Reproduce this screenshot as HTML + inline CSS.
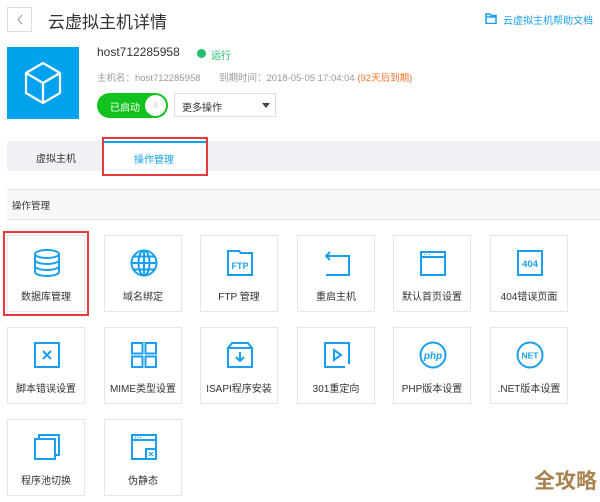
<!DOCTYPE html><html><head><meta charset="utf-8"><style>
*{margin:0;padding:0;box-sizing:border-box}
body{width:600px;height:502px;background:#fff;font-family:"Liberation Sans","Noto Sans CJK SC",sans-serif;position:relative;overflow:hidden;color:#333}
.a{position:absolute}
.card{position:absolute;width:78px;height:77px;border:1px solid #e6e6e6;background:#fff}
.card svg{position:absolute;left:24px;top:12px}
.card .t{position:absolute;left:0;right:0;top:52px;text-align:center;font-size:10px;color:#333;white-space:nowrap}
</style></head><body>
<div class="a" style="left:7px;top:7px;width:25px;height:25px;border:1px solid #ddd"></div>
<svg class="a" style="left:15px;top:13px" width="10" height="13"><path d="M7 2L3 6.5L7 11" stroke="#999" fill="none" stroke-width="1"/></svg>
<div class="a" style="left:48px;top:8px;font-size:17px;color:#333">云虚拟主机详情</div>
<svg class="a" style="left:485px;top:13px" width="12" height="11"><path d="M1 1h4l1 1.5h5v8H1z M1 4h10" stroke="#1a9ff0" fill="none" stroke-width="1.5"/></svg>
<div class="a" style="left:503px;top:12px;font-size:10px;color:#1a9ff0;white-space:nowrap">云虚拟主机帮助文档</div>
<div class="a" style="left:7px;top:47px;width:72px;height:72px;background:#00a2ee"></div>
<svg class="a" style="left:21px;top:61px" width="44" height="44"><path d="M22 2L39 12V32L22 42L5 32V12Z M5 12L22 22L39 12 M22 22V42" stroke="#fff" fill="none" stroke-width="2.2" stroke-linejoin="round"/></svg>
<div class="a" style="left:97px;top:45px;font-size:12px;color:#333">host712285958</div>
<div class="a" style="left:197px;top:49px;width:9px;height:9px;border-radius:50%;background:#1fbf6c"></div>
<div class="a" style="left:211px;top:47px;font-size:10px;color:#1fbf6c">运行</div>
<div class="a" style="left:97px;top:70px;font-size:9.5px;color:#999;white-space:nowrap">主机名：host712285958</div>
<div class="a" style="left:219px;top:70px;font-size:9.5px;color:#999;white-space:nowrap">到期时间：2018-05-05 17:04:04 <span style="color:#f5732b">(92天后到期)</span></div>
<div class="a" style="left:97px;top:93px;width:71px;height:25px;border-radius:13px;background:#12c21f"></div>
<div class="a" style="left:110px;top:99px;font-size:10px;color:#fff">已启动</div>
<div class="a" style="left:145px;top:95px;width:21px;height:21px;border-radius:50%;background:#fff;color:#ccc;font-size:9px;text-align:center;line-height:21px">II</div>
<div class="a" style="left:174px;top:93px;width:102px;height:24px;border:1px solid #ddd"></div>
<div class="a" style="left:182px;top:99px;font-size:10px;color:#333">更多操作</div>
<svg class="a" style="left:262px;top:103px" width="8" height="5"><path d="M0 0H8L4 5Z" fill="#444"/></svg>
<div class="a" style="left:7px;top:141px;width:593px;height:30px;background:#eff1f4"></div>
<div class="a" style="left:36px;top:150px;font-size:10px;color:#333">虚拟主机</div>
<div class="a" style="left:104px;top:141px;width:102px;height:32px;background:#fff;border-top:2px solid #00a2ee"></div>
<div class="a" style="left:102px;top:137px;width:106px;height:39px;border:2px solid #e83a3a"></div>
<div class="a" style="left:134px;top:151px;font-size:10px;color:#1a9ff0">操作管理</div>
<div class="a" style="left:7px;top:189px;width:593px;height:31px;background:#f7f8fa;border-top:1px solid #e5e5e5;border-bottom:1px solid #e5e5e5"></div>
<div class="a" style="left:12px;top:198px;font-size:9.5px;color:#333">操作管理</div>

<div class="card" style="left:7px;top:235px"><svg width="30" height="30"><g stroke="#1a9ff0" fill="none" stroke-width="2"><ellipse cx="15" cy="6" rx="12" ry="4"/><path d="M3 6v18c0 2.2 5.4 4 12 4s12-1.8 12-4V6 M3 12c0 2.2 5.4 4 12 4s12-1.8 12-4 M3 18c0 2.2 5.4 4 12 4s12-1.8 12-4"/></g></svg><div class="t">数据库管理</div></div>
<div class="card" style="left:104px;top:235px"><svg width="30" height="30"><g stroke="#1a9ff0" fill="none" stroke-width="2"><circle cx="15" cy="15" r="12.5"/><ellipse cx="15" cy="15" rx="5.5" ry="12.5"/><path d="M2.5 15h25 M15 2.5v25 M4.5 8.5h21 M4.5 21.5h21"/></g></svg><div class="t">域名绑定</div></div>
<div class="card" style="left:200px;top:235px"><svg width="30" height="30"><path d="M3 3h11l2 2h11v22H3z" stroke="#1a9ff0" fill="none" stroke-width="2"/><text x="15" y="21" text-anchor="middle" font-size="9" font-weight="bold" fill="#1a9ff0" font-family="Liberation Sans">FTP</text></svg><div class="t">FTP 管理</div></div>
<div class="card" style="left:297px;top:235px"><svg width="30" height="30"><path d="M4 8h23v19H4 M8 4L4 8l4 4" stroke="#1a9ff0" fill="none" stroke-width="2"/></svg><div class="t">重启主机</div></div>
<div class="card" style="left:393px;top:235px"><svg width="30" height="30"><path d="M3 4h24v23H3z M3 9h24" stroke="#1a9ff0" fill="none" stroke-width="2"/><path d="M6 6.5h1M8.5 6.5h1M11 6.5h1" stroke="#1a9ff0"/></svg><div class="t">默认首页设置</div></div>
<div class="card" style="left:490px;top:235px"><svg width="30" height="30"><path d="M3 3h24v24H3z" stroke="#1a9ff0" fill="none" stroke-width="2"/><text x="15" y="19" text-anchor="middle" font-size="9.5" font-weight="bold" fill="#1a9ff0" font-family="Liberation Sans">404</text></svg><div class="t">404错误页面</div></div>

<div class="card" style="left:7px;top:327px"><svg width="30" height="30"><path d="M3 3h24v24H3z M11 11l8 8M19 11l-8 8" stroke="#1a9ff0" fill="none" stroke-width="2"/></svg><div class="t">脚本错误设置</div></div>
<div class="card" style="left:104px;top:327px"><svg width="30" height="30"><path d="M3 3h10.5v10.5H3z M16.5 3H27v10.5H16.5z M3 16.5h10.5V27H3z M16.5 16.5H27V27H16.5z" stroke="#1a9ff0" fill="none" stroke-width="2"/></svg><div class="t">MIME类型设置</div></div>
<div class="card" style="left:200px;top:327px"><svg width="30" height="30"><path d="M3 8l4-5h16l4 5v19H3z M3 8h24 M15 12v9 M11 17l4 4 4-4" stroke="#1a9ff0" fill="none" stroke-width="2"/></svg><div class="t">ISAPI程序安装</div></div>
<div class="card" style="left:297px;top:327px"><svg width="30" height="30"><path d="M27 24V3H3v24h20 M12 10v10l7-5z" stroke="#1a9ff0" fill="none" stroke-width="2"/></svg><div class="t">301重定向</div></div>
<div class="card" style="left:393px;top:327px"><svg width="30" height="30"><circle cx="15" cy="15" r="12.5" stroke="#1a9ff0" fill="none" stroke-width="2"/><text x="15" y="19" text-anchor="middle" font-size="10" font-style="italic" font-weight="bold" fill="#1a9ff0" font-family="Liberation Sans">php</text></svg><div class="t">PHP版本设置</div></div>
<div class="card" style="left:490px;top:327px"><svg width="30" height="30"><circle cx="15" cy="15" r="12.5" stroke="#1a9ff0" fill="none" stroke-width="2"/><text x="15" y="18.5" text-anchor="middle" font-size="8.5" font-weight="bold" fill="#1a9ff0" font-family="Liberation Sans">NET</text></svg><div class="t">.NET版本设置</div></div>

<div class="card" style="left:7px;top:419px"><svg width="30" height="30"><path d="M3 7h20v20H3z M7 7V3h20v20h-4" stroke="#1a9ff0" fill="none" stroke-width="2"/></svg><div class="t">程序池切换</div></div>
<div class="card" style="left:104px;top:419px"><svg width="30" height="30"><path d="M3 3h24v24H3z M3 8h24" stroke="#1a9ff0" fill="none" stroke-width="2"/><rect x="17" y="17" width="10" height="10" fill="#fff" stroke="#1a9ff0" stroke-width="2"/><path d="M20 20l4 4M24 20l-4 4M6 5.5h1M8.5 5.5h1M11 5.5h1" stroke="#1a9ff0" stroke-width="1.2"/></svg><div class="t">伪静态</div></div>

<div class="a" style="left:3px;top:231px;width:86px;height:85px;border:2px solid #e83a3a"></div>
<div class="a" style="left:534px;top:468px;font-size:21px;font-weight:bold;color:#a8834f;font-family:'Noto Sans CJK SC',sans-serif;line-height:24px">全攻略</div>
</body></html>
